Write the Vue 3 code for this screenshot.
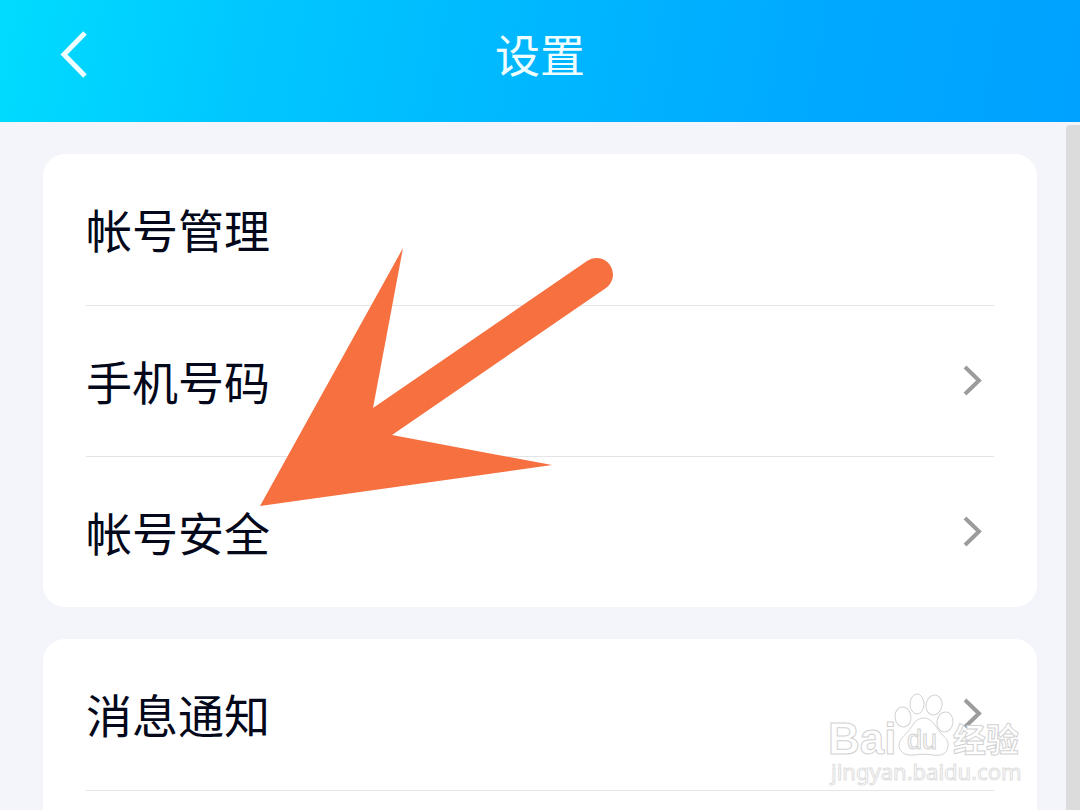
<script setup>
const groups = [
  {
    id: 'account',
    rows: [
      { label: '帐号管理', arrow: false },
      { label: '手机号码', arrow: true },
      { label: '帐号安全', arrow: true },
    ],
  },
  { id: 'message', open: true, rows: [{ label: '消息通知', arrow: true }] },
]
</script>

<template>
  <div class="page">
    <header class="bar">
      <button class="back" type="button" aria-label="返回">
        <svg width="32" height="50" viewBox="0 0 32 50" fill="none" stroke="#effeff" stroke-width="5">
          <path d="M26 3 5 24.500 26 46" />
        </svg>
      </button>
      <h1 class="title">设置</h1>
    </header>

    <main class="content">
      <ul v-for="group in groups" :key="group.id" class="card" :class="{ open: group.open }">
        <li v-for="row in group.rows" :key="row.label" class="item">
          <button class="row" type="button">
            <span class="label">{{ row.label }}</span>
            <svg v-if="row.arrow" class="chevron" width="20" height="32" viewBox="0 0 20 32" fill="none" stroke="#9c9c9c" stroke-width="4">
              <path d="M3 2 17 15.500 3 29" />
            </svg>
          </button>
        </li>
        <li v-if="group.open" class="item rest"></li>
      </ul>
      <div class="scrollbar"></div>
    </main>

    <svg class="pointer" width="354" height="260" viewBox="0 0 354 260" aria-hidden="true">
      <path fill="#f67040" d="M0 258 143 0 113 160 327 13A16.500 16.500 0 0 1 346 40L132 187 292 217Z" />
    </svg>

    <svg class="watermark" width="200" height="100" viewBox="0 0 200 100" fill="#fff" stroke="#d2d2d2" stroke-width="1">
      <text class="brand" x="1" y="65">Bai</text>
      <ellipse cx="76" cy="28" rx="8" ry="10" transform="rotate(-8 76 28)" />
      <ellipse cx="90" cy="15" rx="7" ry="10" />
      <ellipse cx="107" cy="16" rx="8" ry="10" transform="rotate(12 107 16)" />
      <ellipse cx="118" cy="33" rx="8" ry="10" transform="rotate(8 118 33)" />
      <path d="M97 29C104 29 108 36 112 42 117 48 122 51 121 57 120 66 113 67 106 66 99 65 93 65 87 66 79 67 73 64 72 57 72 49 79 46 83 40 87 34 90 29 97 29Z" />
      <text class="du" x="80" y="60">du</text>
      <text class="cjk" x="126" y="63">经验</text>
      <text class="site" x="4" y="91">jingyan.baidu.com</text>
    </svg>
  </div>
</template>

<style>
body {
  margin: 0;
}
</style>

<style scoped>
.page {
  position: relative;
  display: flex;
  flex-direction: column;
  height: 100vh;
  overflow: hidden;
  background: #f4f5fa;
  font-family: "Noto Sans CJK SC", sans-serif;
}
.bar {
  display: grid;
  grid-template-columns: 1fr auto 1fr;
  align-items: center;
  flex: none;
  height: 122px;
  padding: 0 59px;
  box-sizing: border-box;
  background: linear-gradient(100deg, #00dcff 0%, #00c8ff 22%, #00b8ff 48%, #00a8ff 78%, #00a2ff 100%);
}
.back {
  justify-self: start;
  display: flex;
  margin: 0 0 12px;
  padding: 0;
  border: 0;
  background: none;
}
.title {
  margin: 0 0 14px;
  color: #effeff;
  font-size: 45px;
  font-weight: 400;
  line-height: 60px;
}
.content {
  position: relative;
  flex: 1;
  display: flex;
  flex-direction: column;
  gap: 32px;
  min-height: 0;
  padding: 32px 43px 0;
}
.card {
  flex: none;
  margin: 0;
  padding: 0 43px;
  border-radius: 22px;
  background: #fff;
  list-style: none;
}
.card.open {
  flex: 1;
  border-radius: 22px 22px 0 0;
}
.item + .item {
  border-top: 1px solid #e4e4e6;
  margin-bottom: -1px;
}
.row {
  display: flex;
  align-items: center;
  justify-content: space-between;
  width: 100%;
  height: 151px;
  padding: 0 12px 2px 0;
  border: 0;
  background: none;
  color: #03081a;
  font: inherit;
  text-align: left;
}
.label {
  padding-bottom: 2px;
  font-size: 46px;
  line-height: 64px;
}
.scrollbar {
  position: absolute;
  top: 3px;
  right: 0;
  bottom: 0;
  width: 14px;
  border-radius: 4px 0 0 0;
  background: #dcdcdc;
}
.pointer {
  position: absolute;
  top: 248px;
  left: 260px;
}
.watermark {
  position: absolute;
  right: 53px;
  bottom: 21px;
  overflow: visible;
}
.brand {
  font: 700 44px "Liberation Sans", sans-serif;
}
.du {
  font: 400 27px "Liberation Sans", sans-serif;
}
.cjk {
  font: 700 33px "Noto Sans CJK SC", sans-serif;
}
.site {
  font: 400 22px "Noto Sans", sans-serif;
  stroke: #dedede;
}
</style>
